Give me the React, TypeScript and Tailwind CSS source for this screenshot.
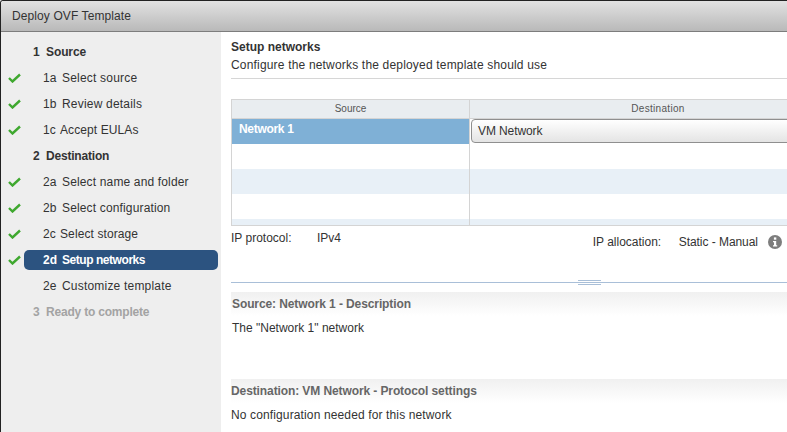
const steps = [
  { label: '1', text: 'Source', head: true, track: 'tracking-[-0.1px]' },
  { label: '1a', text: 'Select source', done: true, track: 'tracking-[0.2px]' },
  { label: '1b', text: 'Review details', done: true, track: 'tracking-[0.2px]' },
  { label: '1c', text: 'Accept EULAs', done: true, track: 'tracking-[0.1px]', short: true },
  { label: '2', text: 'Destination', head: true, track: 'tracking-[-0.2px]' },
  { label: '2a', text: 'Select name and folder', done: true, track: 'tracking-[0.15px]' },
  { label: '2b', text: 'Select configuration', done: true, track: 'tracking-[0.15px]' },
  { label: '2c', text: 'Select storage', done: true, track: 'tracking-[0.1px]', short: true },
  { label: '2d', text: 'Setup networks', done: true, active: true, track: 'tracking-[-0.45px]' },
  { label: '2e', text: 'Customize template', track: 'tracking-[0.2px]' },
  { label: '3', text: 'Ready to complete', head: true, off: true, track: 'tracking-[-0.2px]' },
];

function Step({ s }: { s: (typeof steps)[number] }) {
  return (
    <div className="flex h-[26px] items-center">
      <div className="flex w-[23px] shrink-0 justify-start pl-[7px]">
        {s.done && (
          <svg width="13" height="10" viewBox="0 0 13 10" fill="none">
            <path d="M1 5l3.5 3.5L12 1.5" stroke="#3fa82f" strokeWidth="2.4" />
          </svg>
        )}
      </div>
      {s.head ? (
        <div className={`ml-[9px] flex font-bold ${s.off ? 'text-[#a3a3a3]' : 'text-[#333]'}`}>
          <span className="w-[13px]">{s.label}</span>
          <span className={s.track}>{s.text}</span>
        </div>
      ) : (
        <div
          className={`flex h-5 w-[194px] items-center rounded-[5px] pl-[19px] ${
            s.active ? 'bg-[#2c5380] font-bold text-white' : 'text-[#333]'
          }`}
        >
          <span className={s.short ? 'w-[17px]' : 'w-[19px]'}>{s.label}</span>
          <span className={s.track}>{s.text}</span>
        </div>
      )}
    </div>
  );
}

export default function App() {
  return (
    <div className="flex h-[432px] w-[787px] flex-col overflow-hidden rounded-tl-[3px] border-l border-t border-[#222] bg-white font-['Liberation_Sans',sans-serif] text-xs text-[#333]">
      <div className="flex h-[31px] shrink-0 items-center border-b border-[#7d7d7d] bg-gradient-to-b from-[#e2e2e2] to-[#b9b9b9] pl-[11px] tracking-[0.1px] text-[#333]">
        Deploy OVF Template
      </div>
      <div className="flex min-h-0 flex-1">
        <div className="w-[220px] shrink-0 bg-[#eeeeee] pt-[7px]">
          {steps.map(s => (
            <Step key={s.label} s={s} />
          ))}
        </div>
        <div className="min-w-0 flex-1 pl-[10px]">
          <div className="mt-[8px] font-bold leading-[15px]">Setup networks</div>
          <div className="mt-[3px] leading-[15px] tracking-[0.18px]">Configure the networks the deployed template should use</div>
          <div className="mt-[5px] border-t border-[#d6d6d6]" />

          <div className="mt-5 w-[615px] border-y border-l border-[#d4d4d4]">
            <div className="flex h-[19px] border-b border-[#d4d4d4] bg-[#e9edf0] text-[10px] text-[#555]">
              <div className="flex w-[238px] items-center justify-center border-r border-[#d4d4d4]">Source</div>
              <div className="flex flex-1 items-center justify-center tracking-[0.3px]">Destination</div>
            </div>
            <div className="flex h-[25px]">
              <div className="w-[238px] border-r border-[#d4d4d4] bg-[#7fb0d6] pl-[7px] pt-[2px] font-bold tracking-[-0.3px] text-white">
                Network 1
              </div>
              <div className="flex-1 pl-px">
                <div className="flex h-[24px] items-center rounded-l-[4px] border border-[#8f8f8f] bg-gradient-to-b from-white to-[#e4e4e4] pl-[6px] tracking-[-0.1px]">
                  VM Network
                </div>
              </div>
            </div>
            {['bg-white', 'bg-[#e8f0f7]', 'bg-white'].map((c, i) => (
              <div key={i} className={`flex h-[25px] ${c}`}>
                <div className="w-[238px] border-r border-[#d4d4d4]" />
              </div>
            ))}
            <div className="flex h-[6px] bg-[#e8f0f7]">
              <div className="w-[238px] border-r border-[#d4d4d4]" />
            </div>
          </div>

          <div className="flex h-[56px] justify-between pr-[5px]">
            <div className="mt-[4px] flex h-[15px] items-center">
              <span className="w-[86px]">IP protocol:</span>
              IPv4
            </div>
            <div className="mt-[8px] flex h-[16px] items-center whitespace-nowrap">
              <span className="w-[86px]">IP allocation:</span>
              <span className="tracking-[-0.05px]">Static - Manual</span>
              <svg width="14" height="14" viewBox="0 0 14 14" className="ml-[10px]">
                <circle cx="7" cy="7" r="7" fill="#7d7d7d" />
                <rect x="5.9" y="2.4" width="2.4" height="2.3" fill="#fff" />
                <path d="M5 6h3.2v4.2H9.2v1.3H5v-1.3h1V7.3H5z" fill="#fff" />
              </svg>
            </div>
          </div>

          <div className="relative border-t border-[#a9bfd8]">
            <div className="absolute left-[347px] top-[-3px] h-[5px] w-[23px] border-y border-[#a9bfd8]" />
          </div>

          <div className="mt-[9px] flex h-[24px] items-center bg-gradient-to-b from-[#f0f0f0] to-white pl-px font-bold tracking-[-0.1px] text-[#666]">
            Source: Network 1 - Description
          </div>
          <div className="mt-[5px] h-[52px] pl-px leading-[15px] text-[#333]">The "Network 1" network</div>
          <div className="mt-[6px] flex h-[24px] items-center bg-gradient-to-b from-[#f0f0f0] to-white font-bold tracking-[-0.1px] text-[#666]">
            Destination: VM Network - Protocol settings
          </div>
          <div className="mt-[5px] leading-[15px] tracking-[0.13px]">No configuration needed for this network</div>
        </div>
      </div>
    </div>
  );
}
